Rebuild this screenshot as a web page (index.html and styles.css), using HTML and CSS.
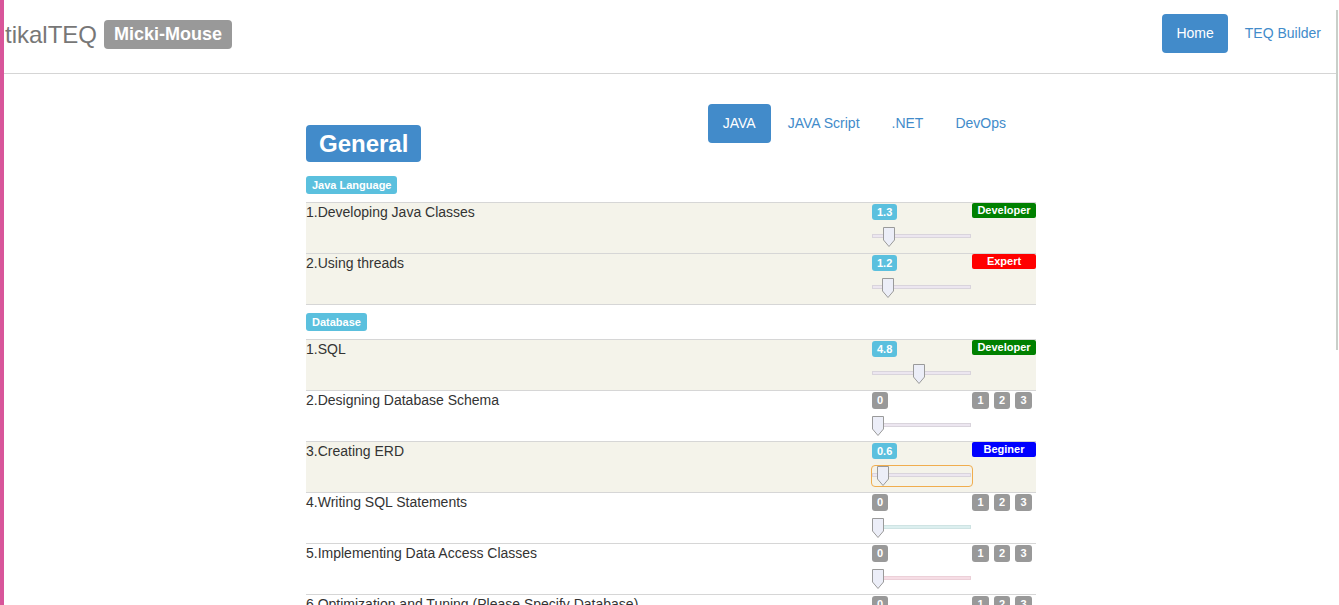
FILE: index.html
```html
<!DOCTYPE html>
<html>
<head>
<meta charset="utf-8">
<title>tikalTEQ</title>
<link rel="stylesheet" href="styles.css">
</head>
<body>
<div class="scrollbar"></div>
<header class="navbar">
  <div class="brand-wrap">
    <span class="brand">tikalTEQ</span>
    <span class="user-badge">Micki-Mouse</span>
  </div>
  <nav class="top-nav">
    <a class="pill active">Home</a>
    <a class="pill">TEQ Builder</a>
  </nav>
</header>

<main class="container">
  <div class="head">
    <h1 class="title">General</h1>
    <nav class="tabs">
      <a class="pill active">JAVA</a>
      <a class="pill">JAVA Script</a>
      <a class="pill">.NET</a>
      <a class="pill">DevOps</a>
    </nav>
  </div>

  <section class="group">
    <div class="group-label">Java Language</div>
    <div class="rows">
      <div class="row hl">
        <div class="q">1.Developing Java Classes</div>
        <div class="sl">
          <span class="val info">1.3</span>
          <div class="slide"><div class="track t-lav"></div><svg class="handle" style="left:11px" width="12" height="20" viewBox="0 0 12 20"><path d="M0.5 0.5H11.5V13L6 19.5L0.5 13Z"/></svg></div>
        </div>
        <div class="lvl"><span class="lv dev">Developer</span></div>
      </div>
      <div class="row hl">
        <div class="q">2.Using threads</div>
        <div class="sl">
          <span class="val info">1.2</span>
          <div class="slide"><div class="track t-lav"></div><svg class="handle" style="left:10px" width="12" height="20" viewBox="0 0 12 20"><path d="M0.5 0.5H11.5V13L6 19.5L0.5 13Z"/></svg></div>
        </div>
        <div class="lvl"><span class="lv exp">Expert</span></div>
      </div>
    </div>
  </section>

  <section class="group">
    <div class="group-label">Database</div>
    <div class="rows">
      <div class="row hl">
        <div class="q">1.SQL</div>
        <div class="sl">
          <span class="val info">4.8</span>
          <div class="slide"><div class="track t-lav"></div><svg class="handle" style="left:41px" width="12" height="20" viewBox="0 0 12 20"><path d="M0.5 0.5H11.5V13L6 19.5L0.5 13Z"/></svg></div>
        </div>
        <div class="lvl"><span class="lv dev">Developer</span></div>
      </div>
      <div class="row">
        <div class="q">2.Designing Database Schema</div>
        <div class="sl">
          <span class="val gray">0</span>
          <div class="slide"><div class="track t-lav"></div><svg class="handle" style="left:0px" width="12" height="20" viewBox="0 0 12 20"><path d="M0.5 0.5H11.5V13L6 19.5L0.5 13Z"/></svg></div>
        </div>
        <div class="lvl"><span class="num">1</span><span class="num">2</span><span class="num">3</span></div>
      </div>
      <div class="row hl">
        <div class="q">3.Creating ERD</div>
        <div class="sl">
          <span class="val info">0.6</span>
          <div class="slide focus"><div class="track t-lav"></div><svg class="handle" style="left:5px" width="12" height="20" viewBox="0 0 12 20"><path d="M0.5 0.5H11.5V13L6 19.5L0.5 13Z"/></svg></div>
        </div>
        <div class="lvl"><span class="lv beg">Beginer</span></div>
      </div>
      <div class="row">
        <div class="q">4.Writing SQL Statements</div>
        <div class="sl">
          <span class="val gray">0</span>
          <div class="slide"><div class="track t-cyan"></div><svg class="handle" style="left:0px" width="12" height="20" viewBox="0 0 12 20"><path d="M0.5 0.5H11.5V13L6 19.5L0.5 13Z"/></svg></div>
        </div>
        <div class="lvl"><span class="num">1</span><span class="num">2</span><span class="num">3</span></div>
      </div>
      <div class="row">
        <div class="q">5.Implementing Data Access Classes</div>
        <div class="sl">
          <span class="val gray">0</span>
          <div class="slide"><div class="track t-pink"></div><svg class="handle" style="left:0px" width="12" height="20" viewBox="0 0 12 20"><path d="M0.5 0.5H11.5V13L6 19.5L0.5 13Z"/></svg></div>
        </div>
        <div class="lvl"><span class="num">1</span><span class="num">2</span><span class="num">3</span></div>
      </div>
      <div class="row">
        <div class="q">6.Optimization and Tuning (Please Specify Database)</div>
        <div class="sl">
          <span class="val gray">0</span>
          <div class="slide"><div class="track t-lav"></div><svg class="handle" style="left:0px" width="12" height="20" viewBox="0 0 12 20"><path d="M0.5 0.5H11.5V13L6 19.5L0.5 13Z"/></svg></div>
        </div>
        <div class="lvl"><span class="num">1</span><span class="num">2</span><span class="num">3</span></div>
      </div>
    </div>
  </section>
</main>
</body>
</html>
```
FILE: styles.css
```css
html, body {
  margin: 0;
  padding: 0;
}
body {
  font-family: "Liberation Sans", Arial, sans-serif;
  font-size: 14px;
  color: #333;
  background: #fff;
  border-left: 4px solid #d8559a;
  min-height: 605px;
  overflow: hidden;
}
a { text-decoration: none; }

.scrollbar {
  position: fixed;
  right: 1px;
  top: 10px;
  width: 2px;
  height: 340px;
  background: #c9cfc9;
}

.navbar {
  display: flex;
  justify-content: space-between;
  align-items: flex-start;
  height: 73px;
  border-bottom: 1px solid #d5d5d5;
  margin-right: 3px;
}
.brand-wrap {
  display: flex;
  align-items: center;
  padding-top: 20px;
  padding-left: 1px;
}
.brand {
  font-size: 24px;
  color: #777;
  line-height: 29px;
}
.user-badge {
  margin-left: 7px;
  background: #999;
  color: #fff;
  font-weight: bold;
  font-size: 18px;
  line-height: 29px;
  height: 29px;
  padding: 0 10px;
  border-radius: 4px;
}
.top-nav {
  display: flex;
  gap: 2px;
  padding-top: 14px;
}
.pill {
  display: block;
  padding: 0 15px;
  height: 39px;
  line-height: 39px;
  color: #428bca;
  font-size: 14px;
  border-radius: 4px;
}
.pill.active {
  background: #428bca;
  color: #fff;
}
.top-nav .pill.active { padding: 0 14px; }

.container {
  width: 730px;
  margin-left: 302px;
}
.head {
  display: flex;
  justify-content: space-between;
  align-items: flex-start;
}
.title {
  margin: 51px 0 0 0;
  background: #428bca;
  color: #fff;
  font-size: 24px;
  font-weight: bold;
  line-height: 37px;
  height: 37px;
  padding: 0 13px;
  border-radius: 4px;
}
.tabs {
  display: flex;
  gap: 2px;
  margin-top: 30px;
  margin-right: 15px;
}
.tabs .pill.active { padding: 0 15px; }

.group { margin-top: 14px; }
.group + .group { margin-top: 8px; }
.group-label {
  display: inline-block;
  background: #5bc0de;
  color: #fff;
  font-weight: bold;
  font-size: 11px;
  height: 18px;
  line-height: 18px;
  padding: 0 6px;
  border-radius: 3px;
}
.rows {
  margin-top: 8px;
  border-bottom: 1px solid #d6d6d6;
}
.row {
  display: flex;
  height: 50px;
  border-top: 1px solid #d6d6d6;
}
.row.hl { background: #f4f3ea; }
.q {
  flex: 1;
  line-height: 16px;
  padding-top: 1px;
  white-space: nowrap;
}
.sl {
  width: 100px;
}
.val {
  display: inline-block;
  margin-top: 1px;
  height: 16px;
  line-height: 16px;
  padding: 0 5px;
  font-size: 11px;
  font-weight: bold;
  color: #fff;
  border-radius: 3px;
}
.val.info { background: #5bc0de; }
.val.gray {
  background: #999;
  height: 17px;
  line-height: 17px;
  margin-top: 1px;
}
.slide {
  position: relative;
  height: 20px;
  margin-top: 7px;
  border-radius: 3px;
}
.slide.focus {
  outline: 1px solid #f0ad4e;
}
.track {
  position: absolute;
  left: 0;
  right: 1px;
  top: 7px;
  height: 4px;
  border: 1px solid #d9d4dc;
  box-sizing: border-box;
}
.t-lav { background: #ece6f0; }
.t-cyan { background: #dcefef; border-color: #cfe3e3; }
.t-pink { background: #f6dde5; border-color: #ecd0d8; }
.handle {
  position: absolute;
  top: 0;
  display: block;
}
.handle path {
  fill: #eceef8;
  stroke: #9a9a9a;
  stroke-width: 1;
}
.lvl {
  width: 64px;
  display: flex;
  gap: 5px;
}
.lv {
  display: block;
  width: 64px;
  height: 15px;
  line-height: 15px;
  text-align: center;
  font-size: 11px;
  font-weight: bold;
  color: #fff;
  border-radius: 2px;
}
.lv.dev { background: #008000; }
.lv.exp { background: #ff0000; }
.lv.beg { background: #0000ff; }
.num {
  display: block;
  width: 17px;
  height: 17px;
  line-height: 17px;
  margin-top: 1px;
  text-align: center;
  background: #999;
  color: #fff;
  font-size: 11px;
  font-weight: bold;
  border-radius: 3px;
}
.num:nth-child(2) { width: 16px; }
```
